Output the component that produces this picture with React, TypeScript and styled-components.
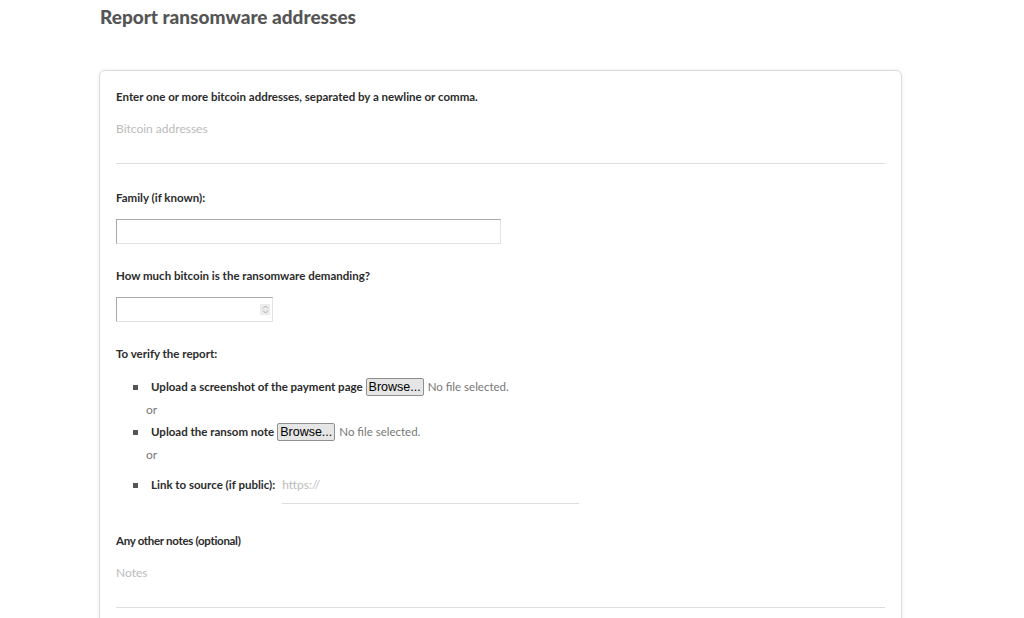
import React, { FC } from 'react';
import styled, { createGlobalStyle } from 'styled-components';

const GlobalStyle = createGlobalStyle`
    body {
        margin: 0;
        background: #fff;
        font-family: Lato, "Open Sans", sans-serif;
        color: #333;
    }
`

const verifyItems = [
    { label: 'Upload a screenshot of the payment page', kind: 'file' },
    { label: 'Upload the ransom note', kind: 'file' },
    { label: 'Link to source (if public):', kind: 'link' },
]

const FileInput: FC = () => (
    <FileWrap>
        <BrowseButton type="button">Browse...</BrowseButton>
        <FileStatus>No file selected.</FileStatus>
    </FileWrap>
)

export default function App() {
    return (
        <PageWrapper>
            <GlobalStyle />
            <Title>Report ransomware addresses</Title>

            <Card>
                <Label>Enter one or more bitcoin addresses, separated by a newline or comma.</Label>
                <LineArea placeholder="Bitcoin addresses" />

                <Label $top={26}>Family (if known):</Label>
                <BoxInput type="text" $width={385} />

                <Label $top={24}>How much bitcoin is the ransomware demanding?</Label>
                <NumberWrap>
                    <BoxInput type="text" $width={157} />
                    <Spinner>
                        <svg width="7" height="9" viewBox="0 0 7 9">
                            <path d="M1 3.5 L3.5 1 L6 3.5" fill="none" stroke="#aaa" strokeWidth="1" />
                            <path d="M1 5.5 L3.5 8 L6 5.5" fill="none" stroke="#aaa" strokeWidth="1" />
                        </svg>
                    </Spinner>
                </NumberWrap>

                <Label $top={24}>To verify the report:</Label>
                <VerifyList>
                    {verifyItems.map((item, i) => (
                        <React.Fragment key={item.label}>
                            {i > 0 && <OrText>or</OrText>}
                            <VerifyItem $link={item.kind === 'link'}>
                                <Bullet />
                                <ItemLabel>{item.label}</ItemLabel>
                                {item.kind === 'file' ? <FileInput /> : <LinkInput placeholder="https://" />}
                            </VerifyItem>
                        </React.Fragment>
                    ))}
                </VerifyList>

                <NotesLabel>Any other notes (optional)</NotesLabel>
                <LineArea placeholder="Notes" />
                <Spacer />
            </Card>
        </PageWrapper>
    )
}

const PageWrapper = styled.div`
    padding: 6px 0 0 99px;
    height: 618px;
    box-sizing: border-box;
    overflow: hidden;
`

const Title = styled.h1`
    margin: 0 0 0 1px;
    font-size: 19px;
    font-weight: 900;
    line-height: 22px;
    color: #555;
`

const Card = styled.div`
    margin-top: 42px;
    width: 803px;
    box-sizing: border-box;
    padding: 18px 16px 0;
    border: 1px solid #dcdcdc;
    border-radius: 6px;
    box-shadow: 0 0 4px rgba(0, 0, 0, 0.08);
    display: flex;
    flex-direction: column;
    align-items: flex-start;
`

const Label = styled.div<{ $top?: number }>`
    margin-top: ${p => p.$top ?? 0}px;
    font-size: 11.5px;
    font-weight: 700;
    line-height: 16px;
    color: #2b2b2b;
`

const NotesLabel = styled(Label)`
    margin-top: 29px;
    letter-spacing: -0.3px;
`

const LineArea = styled.textarea`
    margin-top: 9px;
    width: 100%;
    height: 50px;
    box-sizing: border-box;
    padding: 6px 0 0;
    border: none;
    border-bottom: 1px solid #ddd;
    resize: none;
    outline: none;
    font-family: Lato, "Open Sans", sans-serif;
    font-size: 12px;
    line-height: 18px;
    color: #333;
    &::placeholder { color: #bbb; }
`

const BoxInput = styled.input<{ $width: number }>`
    margin-top: 13px;
    width: ${p => p.$width}px;
    height: 25px;
    box-sizing: border-box;
    border: 1px solid #e3e3e3;
    border-top-color: #a9a9a9;
    border-left-color: #a9a9a9;
    outline: none;
    background: #fff;
`

const NumberWrap = styled.div`
    position: relative;
`

const Spinner = styled.div`
    position: absolute;
    right: 3px;
    top: 20px;
    width: 10px;
    height: 11px;
    background: #ececec;
    display: flex;
    align-items: center;
    justify-content: center;
`

const VerifyList = styled.div`
    margin-top: 14px;
    display: flex;
    flex-direction: column;
`

const VerifyItem = styled.div<{ $link?: boolean }>`
    display: flex;
    align-items: flex-start;
    padding-left: 17px;
    margin-top: ${p => (p.$link ? 8 : 0)}px;
    line-height: 22px;
`

const Bullet = styled.span`
    width: 5px;
    height: 5px;
    background: #555;
    margin: 9px 13px 0 0;
    flex-shrink: 0;
`

const ItemLabel = styled.span`
    font-size: 11.5px;
    font-weight: 700;
    color: #2b2b2b;
    margin-right: 3px;
`

const OrText = styled.div`
    padding-left: 30px;
    font-size: 12px;
    line-height: 23px;
    color: #777;
`

const FileWrap = styled.span`
    display: flex;
    align-items: center;
    height: 22px;
    gap: 4px;
`

const BrowseButton = styled.button`
    height: 18px;
    padding: 0 2px;
    font-family: "Liberation Sans", Arial, sans-serif;
    font-size: 12.5px;
    color: #000;
    background: #e6e6e6;
    border: 1px solid #8f8f8f;
    border-radius: 2px;
`

const FileStatus = styled.span`
    font-size: 11.5px;
    color: #777;
`

const LinkInput = styled.input`
    margin-left: 4px;
    width: 297px;
    box-sizing: border-box;
    padding: 0 0 7px;
    border: none;
    border-bottom: 1px solid #ddd;
    outline: none;
    font-family: Lato, "Open Sans", sans-serif;
    font-size: 12px;
    line-height: 22px;
    &::placeholder { color: #bbb; }
`

const Spacer = styled.div`
    height: 40px;
`
